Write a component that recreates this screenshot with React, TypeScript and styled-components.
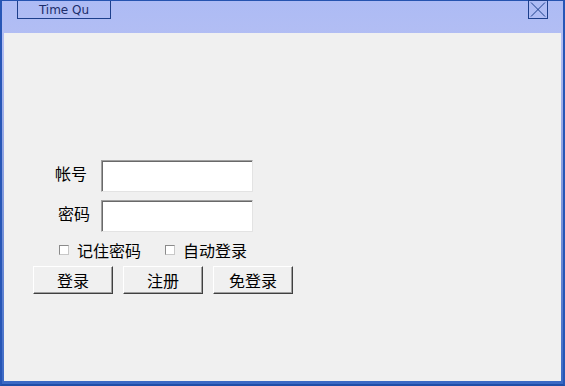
import React from "react";
import styled, { createGlobalStyle } from "styled-components";

const GlobalStyle = createGlobalStyle`
  html, body {
    margin: 0;
    padding: 0;
    background: #f0f0f0;
  }
  body {
    font-family: "Noto Sans CJK SC", "DejaVu Sans", sans-serif;
  }
`;

const Window = styled.div`
  box-sizing: border-box;
  width: 565px;
  height: 386px;
  display: flex;
  flex-direction: column;
  border-top: 1px solid #2553b0;
  border-left: 2px solid #2756b6;
  border-right: 2px solid #2756b6;
  border-bottom: 2px solid #1f4ea8;
  background: linear-gradient(to bottom, #adbbf5 0px, #b3bef3 40px, #7f98dc 200px, #3a68c4 386px);
`;

const TitleBar = styled.div`
  height: 32px;
  flex: none;
  display: flex;
  justify-content: space-between;
  align-items: flex-start;
  padding: 0 15px;
`;

const TitleTab = styled.div`
  box-sizing: border-box;
  width: 94px;
  height: 18px;
  border: 1px solid #1d3f8c;
  border-top: none;
  display: flex;
  align-items: center;
  justify-content: center;
  font-family: "DejaVu Sans", sans-serif;
  font-size: 12px;
  color: #1c2d6a;
`;

const CloseButton = styled.div`
  box-sizing: border-box;
  width: 20px;
  height: 19px;
  margin-top: -1px;
  border: 1px solid #1d3f8c;
  display: flex;
  align-items: center;
  justify-content: center;
`;

const Body = styled.div`
  flex: 1;
  margin: 0 2px 3px 2px;
  background: #f0f0f0;
  padding: 127px 0 0 29px;
  box-sizing: border-box;
`;

const Form = styled.div`
  display: flex;
  flex-direction: column;
  align-items: flex-start;
`;

const FieldRow = styled.div`
  display: flex;
  align-items: center;
  height: 32px;
  margin-bottom: 8px;
`;

const LabelCell = styled.div<{ $indent: number }>`
  width: 68px;
  box-sizing: border-box;
  padding-left: ${({ $indent }) => $indent}px;
  margin-top: -6px;
  font-size: 16px;
  color: #000;
  line-height: 32px;
`;

const TextInput = styled.input`
  box-sizing: border-box;
  width: 152px;
  height: 32px;
  margin: 0;
  padding: 0 4px;
  background: #fff;
  border-style: solid;
  border-width: 1px;
  border-color: #a0a0a0 #e3e3e3 #e3e3e3 #a0a0a0;
  box-shadow: inset 1px 1px 0 #696969;
  outline: none;
  font-size: 14px;
`;

const CheckRow = styled.div`
  display: flex;
  align-items: center;
  height: 20px;
  padding-left: 26px;
`;

const CheckItem = styled.label<{ $gap: number }>`
  display: flex;
  align-items: center;
  margin-right: ${({ $gap }) => $gap}px;
  font-size: 16px;
  color: #000;
  line-height: 20px;
`;

const CheckBox = styled.span`
  box-sizing: border-box;
  width: 10px;
  height: 10px;
  margin-right: 8px;
  background: #fff;
  border: 1px solid #8a8a8a;
  border-right-color: #c8c8c8;
  border-bottom-color: #c8c8c8;
`;

const ButtonRow = styled.div`
  display: flex;
  gap: 10px;
  margin-top: 6px;
`;

const Button = styled.button`
  box-sizing: border-box;
  width: 80px;
  height: 28px;
  margin: 0;
  padding: 0;
  background: #f0f0f0;
  border: 1px solid;
  border-color: #ffffff #404040 #404040 #ffffff;
  box-shadow: inset -1px -1px 0 #a0a0a0;
  font-family: "Noto Sans CJK SC", sans-serif;
  font-size: 16px;
  color: #000;
  line-height: 24px;
`;

export default function App() {
  return (
    <>
      <GlobalStyle />
      <Window>
        <TitleBar>
          <TitleTab>Time Qu</TitleTab>
          <CloseButton>
            <svg width="16" height="15" viewBox="0 0 16 15">
              <path d="M1 0.5 L15 14.5 M15 0.5 L1 14.5" stroke="#1d3f8c" strokeWidth="1" fill="none" />
            </svg>
          </CloseButton>
        </TitleBar>
        <Body>
          <Form>
            <FieldRow>
              <LabelCell $indent={22}>帐号</LabelCell>
              <TextInput />
            </FieldRow>
            <FieldRow>
              <LabelCell $indent={25}>密码</LabelCell>
              <TextInput type="password" />
            </FieldRow>
            <CheckRow>
              <CheckItem $gap={24}>
                <CheckBox />
                记住密码
              </CheckItem>
              <CheckItem $gap={0}>
                <CheckBox />
                自动登录
              </CheckItem>
            </CheckRow>
            <ButtonRow>
              <Button>登录</Button>
              <Button>注册</Button>
              <Button>免登录</Button>
            </ButtonRow>
          </Form>
        </Body>
      </Window>
    </>
  );
}
